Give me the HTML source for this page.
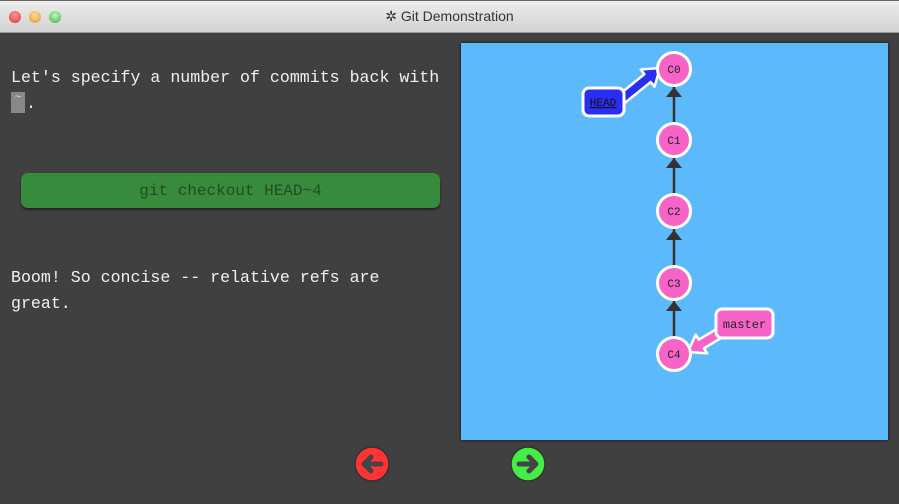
<!DOCTYPE html>
<html><head><style>
*{margin:0;padding:0}
body{width:899px;height:504px;overflow:hidden;background:#404040;position:relative;font-family:"Liberation Mono",monospace}
.tb{position:absolute;left:0;top:0;width:899px;height:33px;background:linear-gradient(#ececec,#d2d2d2);border-bottom:1px solid #9a9a9a;border-top:1px solid #666;box-sizing:border-box}
.tb .t{position:absolute;left:0;right:0;top:7px;text-align:center;font:14px "Liberation Sans",sans-serif;color:#333}
.dot{position:absolute;top:10px;width:12px;height:12px;border-radius:50%}
.txt{position:absolute;left:11px;color:#f0f0f0;font-size:16.6px;line-height:26px;white-space:pre}
.btn{position:absolute;left:21px;top:173px;width:419px;height:35px;background:#388a3c;border-radius:7px;box-shadow:0 2px 2px #222;color:#1f4f22;font-size:16px;line-height:36px;text-align:center}
.tilde{position:absolute;left:11px;top:92px;width:14px;height:21px;background:#888;color:#ddd;font-size:11px;line-height:12px;text-align:center}
.panel{position:absolute;left:461px;top:43px;width:427px;height:397px;background:#5cbafc;box-shadow:0 0 3px #111}
</style></head><body>
<div class="tb">
<div class="dot" style="left:9px;background:radial-gradient(circle at 50% 35%,#f99,#d33)"></div>
<div class="dot" style="left:29px;background:radial-gradient(circle at 50% 35%,#fd9,#d92)"></div>
<div class="dot" style="left:49px;background:radial-gradient(circle at 50% 35%,#bfb,#4a4)"></div>
<div class="t">✲ Git Demonstration</div>
</div>
<div class="txt" style="top:65px">Let's specify a number of commits back with</div>
<div class="tilde">~</div>
<div class="txt" style="top:91px;left:26px">.</div>
<div class="btn">git checkout HEAD~4</div>
<div class="txt" style="top:265px">Boom! So concise -- relative refs are
great.</div>
<div class="panel"></div>
<svg style="position:absolute;left:0;top:0" width="899" height="504">
<g stroke="#333" stroke-width="2.5">
<line x1="674" y1="86" x2="674" y2="123"/><line x1="674" y1="157" x2="674" y2="194"/>
<line x1="674" y1="228" x2="674" y2="266"/><line x1="674" y1="300" x2="674" y2="337"/>
</g>
<g fill="#333">
<path d="M666 97h16l-8-10z"/><path d="M666 168h16l-8-10z"/><path d="M666 240h16l-8-10z"/><path d="M666 311h16l-8-10z"/>
</g>
<path d="M621.2 105.9L650.7 82L654.5 86.7L660 68L640.7 69.5L644.4 74.2L614.9 98.1Z" fill="#2a2ef0" stroke="#fff" stroke-width="2.5" stroke-linejoin="round"/>
<rect x="583" y="88" width="41" height="28" rx="6" fill="#2a2ef0" stroke="#fff" stroke-width="3"/>
<text x="603" y="106" font-size="11" text-anchor="middle" fill="#111" font-family="Liberation Mono" text-decoration="underline">HEAD</text>
<path d="M730.6 332.3L704 348.3L707.1 353.4L688 352L695.7 334.6L698.8 339.7L725.4 323.7Z" fill="#f764c8" stroke="#fff" stroke-width="2.5" stroke-linejoin="round"/>
<rect x="716" y="309" width="57" height="29" rx="6" fill="#f764c8" stroke="#fff" stroke-width="3"/>
<text x="744.5" y="328" font-size="12" text-anchor="middle" fill="#222" font-family="Liberation Mono">master</text>
<g fill="#f764c8" stroke="#fff" stroke-width="3">
<circle cx="674" cy="69" r="16.5"/><circle cx="674" cy="140" r="16.5"/><circle cx="674" cy="211" r="16.5"/><circle cx="674" cy="283" r="16.5"/><circle cx="674" cy="354" r="16.5"/>
</g>
<g font-size="11" text-anchor="middle" fill="#222" font-family="Liberation Mono">
<text x="674" y="73">C0</text><text x="674" y="144">C1</text><text x="674" y="215">C2</text><text x="674" y="287">C3</text><text x="674" y="358">C4</text>
</g>
<circle cx="372" cy="464" r="17" fill="#f33" stroke="#333" stroke-width="1.5"/>
<path d="M381 464h-16M371 457l-7 7 7 7" stroke="#444" stroke-width="5" fill="none" stroke-linecap="round" stroke-linejoin="round"/>
<circle cx="528" cy="464" r="17" fill="#4e4" stroke="#333" stroke-width="1.5"/>
<path d="M519 464h16M529 457l7 7-7 7" stroke="#444" stroke-width="5" fill="none" stroke-linecap="round" stroke-linejoin="round"/>
</svg>
</body></html>
